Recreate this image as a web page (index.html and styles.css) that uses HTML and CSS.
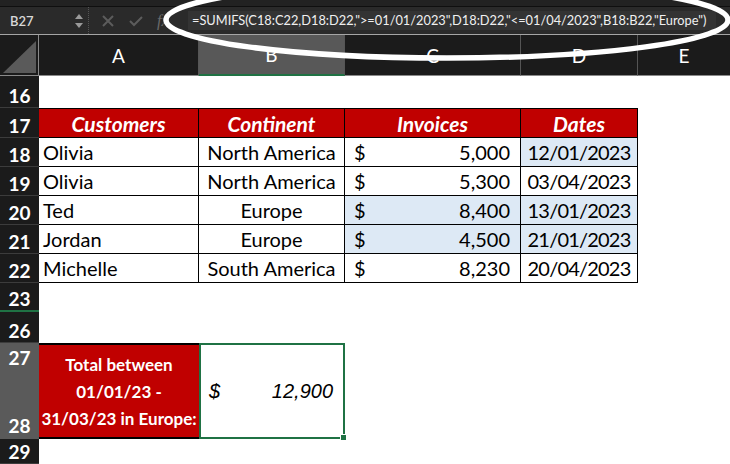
FILE: index.html
```html
<!DOCTYPE html>
<html lang="en">
<head>
  <meta charset="UTF-8" />
  <title>SUMIFS between dates</title>
  <link rel="stylesheet" href="styles.css">
</head>
<body>
  <div class="app">

    <div class="top-strip"></div>

    <div class="formula-bar">
      <div class="name-box">
        <span>B27</span>
        <svg class="spin" width="10" height="18" viewBox="0 0 10 18">
          <path d="M5 2 L9 7 L1 7 Z" fill="#9a9a9a"/>
          <path d="M5 16 L9 11 L1 11 Z" fill="#9a9a9a"/>
        </svg>
      </div>
      <div class="fx-buttons">
        <svg width="14" height="14" viewBox="0 0 14 14">
          <path d="M2 2 L12 12 M12 2 L2 12" stroke="#5c5c5c" stroke-width="2"/>
        </svg>
        <svg width="16" height="14" viewBox="0 0 16 14">
          <path d="M2 7 L6 11 L14 3" stroke="#5c5c5c" stroke-width="2" fill="none"/>
        </svg>
        <span class="fx">fx</span>
      </div>
      <div class="formula">=SUMIFS(C18:C22,D18:D22,"&gt;=01/01/2023",D18:D22,"&lt;=01/04/2023",B18:B22,"Europe")</div>
    </div>

    <div class="sheet">
      <!-- cabecera de columnas -->
      <div class="corner"><div class="corner-tri"></div></div>
      <div class="col-head">A</div>
      <div class="col-head active">B</div>
      <div class="col-head">C</div>
      <div class="col-head">D</div>
      <div class="col-head last">E</div>

      <div class="row-head">16</div>
      <div class="blank"></div>

      <div class="row-head">17</div>
      <div class="cell th">Customers</div>
      <div class="cell th">Continent</div>
      <div class="cell th">Invoices</div>
      <div class="cell th">Dates</div>
      <div class="empty"></div>

      <div class="row-head">18</div>
      <div class="cell">Olivia</div>
      <div class="cell center">North America</div>
      <div class="cell money"><span>$</span><span>5,000</span></div>
      <div class="cell date blue">12/01/2023</div>
      <div class="empty"></div>

      <div class="row-head">19</div>
      <div class="cell">Olivia</div>
      <div class="cell center">North America</div>
      <div class="cell money"><span>$</span><span>5,300</span></div>
      <div class="cell date">03/04/2023</div>
      <div class="empty"></div>

      <div class="row-head">20</div>
      <div class="cell">Ted</div>
      <div class="cell center">Europe</div>
      <div class="cell money blue"><span>$</span><span>8,400</span></div>
      <div class="cell date blue">13/01/2023</div>
      <div class="empty"></div>

      <div class="row-head">21</div>
      <div class="cell">Jordan</div>
      <div class="cell center">Europe</div>
      <div class="cell money blue"><span>$</span><span>4,500</span></div>
      <div class="cell date blue">21/01/2023</div>
      <div class="empty"></div>

      <div class="row-head">22</div>
      <div class="cell">Michelle</div>
      <div class="cell center">South America</div>
      <div class="cell money"><span>$</span><span>8,230</span></div>
      <div class="cell date">20/04/2023</div>
      <div class="empty"></div>

      <div class="row-head hidden-next">23</div>
      <div class="blank"></div>

      <div class="row-head">26</div>
      <div class="blank"></div>

      <div class="row-head sel">27</div>
      <div class="total-label">Total between<br>01/01/23 -<br>31/03/23 in Europe:</div>
      <div class="total-value">
        <span>$</span><span>12,900</span>
        <div class="fill-handle"></div>
      </div>
      <div class="blank-right"></div>

      <div class="row-head sel">28</div>
      <div class="blank-right"></div>

      <div class="row-head">29</div>
      <div class="blank"></div>
    </div>

    <!-- anotación a mano alzada -->
    <svg class="annotation" width="730" height="80" viewBox="0 0 730 80">
      <ellipse cx="447" cy="20" rx="281" ry="38" fill="none" stroke="#ffffff" stroke-width="5.5"/>
    </svg>
  </div>
</body>
</html>
```

FILE: styles.css
```css
body {
  margin: 0;
  background-color: #ffffff;
  font-family: Lato, "Open Sans", sans-serif;
}

.app {
  position: relative;
  width: 730px;
  height: 464px;
  overflow: hidden;
}

.top-strip {
  height: 6px;
  background-color: #222222;
  border-bottom: 1px solid #0f0f0f;
}

/* ========== BARRA DE FORMULAS ========== */
.formula-bar {
  display: flex;
  align-items: center;
  height: 27px;
  background-color: #2a2a2a;
  border-bottom: 1px solid #a5a5a5;
}

.name-box {
  display: flex;
  align-items: center;
  justify-content: space-between;
  width: 74px;
  height: 100%;
  padding: 0 4px 0 10px;
  color: #d8d8d8;
  font-size: 13px;
  font-weight: 600;
  border-right: 1px dotted #555555;
}

.fx-buttons {
  display: flex;
  align-items: center;
  gap: 13px;
  width: 99px;
  padding-left: 12px;
  box-sizing: border-box;
}

.fx {
  color: #6a6a6a;
  font-family: "Liberation Serif", serif;
  font-style: italic;
  font-size: 16px;
}

.formula {
  flex: 1;
  height: 19px;
  line-height: 19px;
  margin-right: 14px;
  padding-left: 4px;
  background-color: #333333;
  color: #f0f0f0;
  font-size: 12.8px;
  white-space: nowrap;
}

/* ========== HOJA ========== */
.sheet {
  display: grid;
  grid-template-columns: 39px 160px 146px 176px 117px 1fr;
  grid-template-rows: 41px 32px 30px 29px 29px 29px 29px 29px 29px 31px 28px 68px 1fr;
  height: 429px;
}

.corner {
  position: relative;
  background-color: #1b1b1b;
  border-right: 1px solid #8a8a8a;
  border-bottom: 1px solid #8a8a8a;
}

.corner-tri {
  position: absolute;
  right: 2px;
  bottom: 2px;
  width: 0;
  height: 0;
  border-left: 33px solid transparent;
  border-bottom: 32px solid #5a5a5a;
}

.col-head {
  display: flex;
  align-items: center;
  justify-content: center;
  background-color: #1b1b1b;
  color: #ffffff;
  font-size: 19px;
  border-right: 1px solid #555555;
  border-bottom: 1px solid #8a8a8a;
}

.col-head.active {
  background-color: #585858;
  border-bottom: 2px solid #1f7244;
}

.col-head.last {
  border-right: none;
}

.row-head {
  display: flex;
  align-items: flex-end;
  justify-content: center;
  padding-bottom: 2px;
  box-sizing: border-box;
  background-color: #1b1b1b;
  color: #ffffff;
  font-size: 19px;
  font-weight: 700;
  line-height: 1;
  border-bottom: 1px solid #3c3c3c;
}

.row-head.sel {
  background-color: #5a5a5a;
  border-bottom: none;
  padding-bottom: 4px;
}

.row-head.hidden-next {
  border-bottom: 2px solid #1f7244;
}

.blank {
  grid-column: 2 / -1;
}

.blank-right {
  grid-column: 4 / -1;
}

/* ========== TABLA ========== */
.cell {
  display: flex;
  align-items: center;
  padding: 0 4px;
  font-size: 20px;
  color: #000000;
  border-right: 1px solid #000000;
  border-bottom: 1px solid #000000;
  white-space: nowrap;
}

.cell.th {
  justify-content: center;
  background-color: #c00000;
  color: #ffffff;
  font-size: 21px;
  font-weight: 700;
  font-style: italic;
  border-top: 1px solid #000000;
}

.cell.center {
  justify-content: center;
}

.cell.money {
  justify-content: space-between;
  padding: 0 10px 0 9px;
}

.cell.date {
  justify-content: center;
  letter-spacing: -0.8px;
}

.cell.blue {
  background-color: #dde9f5;
}

.total-label {
  grid-row: span 2;
  display: flex;
  align-items: center;
  justify-content: center;
  text-align: center;
  background-color: #c00000;
  color: #ffffff;
  font-size: 17px;
  font-weight: 700;
  line-height: 27px;
  border-top: 2px solid #000000;
  border-bottom: 2px solid #000000;
}

.total-value {
  grid-row: span 2;
  position: relative;
  display: flex;
  align-items: center;
  justify-content: space-between;
  padding: 0 10px 0 8px;
  font-family: "Liberation Sans", Arial, sans-serif;
  font-style: italic;
  font-size: 20px;
  border: 2px solid #1f7244;
}

.fill-handle {
  position: absolute;
  right: -4px;
  bottom: -4px;
  width: 5px;
  height: 5px;
  background-color: #1f7244;
  border: 1px solid #ffffff;
}

.annotation {
  position: absolute;
  top: 0;
  left: 0;
}
```
